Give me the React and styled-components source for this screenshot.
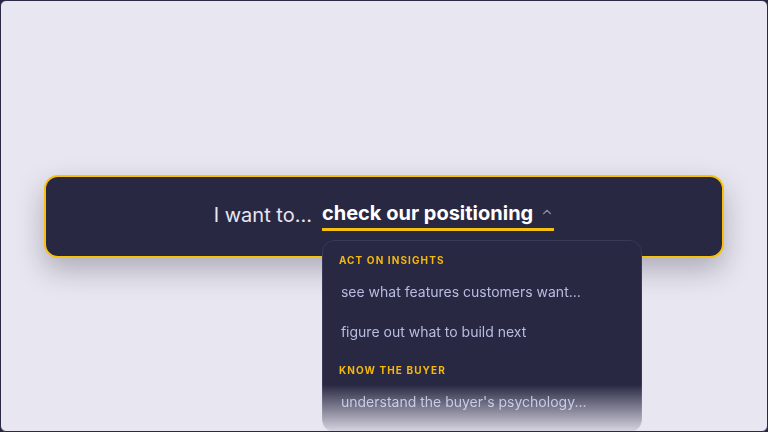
import React, { useState } from 'react';
import styled, { createGlobalStyle } from 'styled-components';
import { ChevronUp } from 'lucide-react';

const GlobalStyle = createGlobalStyle`
  * { box-sizing: border-box; }
  html, body {
    margin: 0;
    padding: 0;
    background: #262641;
    font-family: Inter, "Noto Sans", sans-serif;
  }
`;

const groups = [
  {
    title: 'Act on insights',
    items: ['see what features customers want...', 'figure out what to build next'],
  },
  {
    title: 'Know the buyer',
    items: ["understand the buyer's psychology..."],
  },
];

const App = () => {
  const [choice, setChoice] = useState('check our positioning');
  const [open, setOpen] = useState(true);

  return (
    <Frame>
      <GlobalStyle />
      <Bar>
        <Lead>I want to...</Lead>
        <Picker>
          <Trigger onClick={() => setOpen(!open)}>
            <span>{choice}</span>
            <ChevronUp size={14} strokeWidth={2} color="#8b8aa6" />
          </Trigger>
          {open && (
            <Menu>
              {groups.map((g) => (
                <React.Fragment key={g.title}>
                  <GroupTitle>{g.title}</GroupTitle>
                  {g.items.map((item) => (
                    <Option key={item} onClick={() => { setChoice(item); setOpen(false); }}>
                      {item}
                    </Option>
                  ))}
                </React.Fragment>
              ))}
            </Menu>
          )}
        </Picker>
      </Bar>
    </Frame>
  );
};

const Frame = styled.div`
  width: 768px;
  height: 432px;
  border: 1px solid #2a2946;
  border-radius: 6px;
  background: #e8e6f0;
  overflow: hidden;
  display: flex;
  align-items: center;
  padding: 0 43px;
`;

const Bar = styled.div`
  flex: 1;
  height: 83px;
  background: #282843;
  border: 2px solid #f6c10e;
  border-radius: 14px;
  box-shadow: 0 12px 28px rgba(20, 20, 40, 0.28);
  display: flex;
  align-items: center;
  justify-content: center;
  gap: 10px;
  padding-bottom: 2px;
`;

const Lead = styled.span`
  color: #e8e6f0;
  font-size: 20px;
  font-weight: 400;
  line-height: 28px;
`;

const Picker = styled.div`
  position: relative;
`;

const Trigger = styled.button`
  display: flex;
  align-items: center;
  gap: 7px;
  background: none;
  border: none;
  border-bottom: 3px solid #f6c10e;
  padding: 0 0 1px 0;
  color: #ffffff;
  font-family: inherit;
  font-size: 20px;
  font-weight: 700;
  line-height: 28px;
  cursor: pointer;

  svg {
    margin-top: -2px;
  }
`;

const Menu = styled.div`
  position: absolute;
  top: calc(100% + 9px);
  left: 0;
  width: 320px;
  height: 192px;
  overflow: hidden;
  background: #282843;
  border: 1px solid #3a3a58;
  border-radius: 12px;
  z-index: 2;
  -webkit-mask-image: linear-gradient(to bottom, #000 145px, rgba(0, 0, 0, 0.08) 100%);
  mask-image: linear-gradient(to bottom, #000 145px, rgba(0, 0, 0, 0.08) 100%);
`;

const GroupTitle = styled.div`
  padding: 12px 16px 4px;
  line-height: 14px;
  font-size: 10px;
  font-weight: 700;
  letter-spacing: 1.1px;
  text-transform: uppercase;
  color: #f6b80c;
`;

const Option = styled.div`
  height: 40px;
  display: flex;
  align-items: center;
  padding: 0 18px;
  font-size: 14px;
  color: #b8bcde;
  cursor: pointer;

  &:hover {
    color: #ffffff;
  }
`;

export default App;
